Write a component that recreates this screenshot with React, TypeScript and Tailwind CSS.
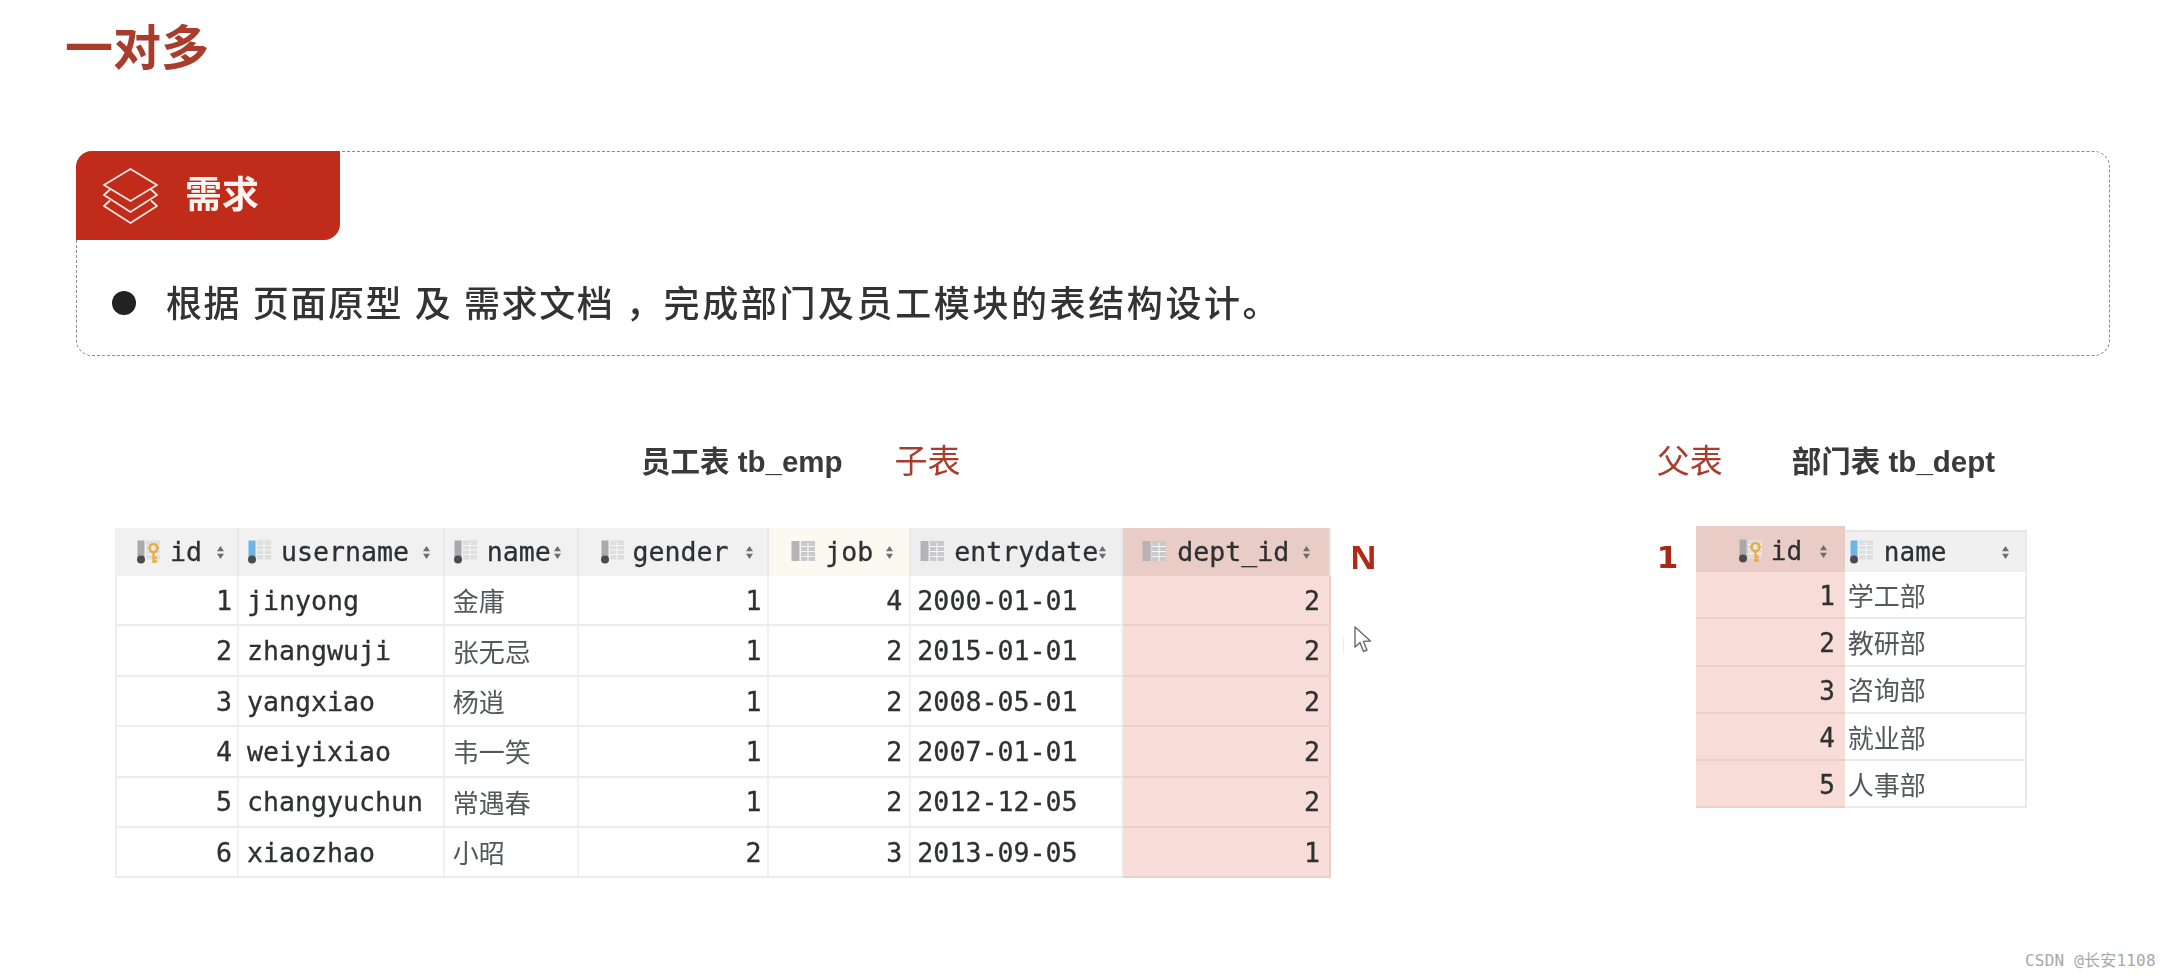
import React from "react";

const mono = "font-['DejaVu_Sans_Mono','Liberation_Mono',monospace]";
const heavy = "[-webkit-text-stroke:0.3px_#2e3032]";

function ColIcon({ kind }: { kind: "key" | "blue" | "gray" | "plain" }) {
  const bar = kind === "blue" ? "#6fb4e4" : "#a9a9ab";
  return (
    <svg width="25" height="24" viewBox="0 0 25 24" className="shrink-0">
      {kind === "plain" ? (
        <>
          <rect x="0.5" y="1" width="8" height="20" fill="#b4b4b6" />
          <rect x="10" y="1" width="14" height="20" fill="#c9c9cb" />
          <path d="M10 6.5h14M10 11.5h14M10 16.5h14M17 3v18" stroke="#f4f4f4" strokeWidth="1.2" />
        </>
      ) : (
        <>
          <rect x="1.5" y="0.5" width="7" height="16.5" fill={bar} />
          <rect x="10" y="0.5" width="14" height="19" fill="#dededf" />
          <path d="M10 5.5h14M10 10h14M10 14.5h14M17 2v17.5" stroke="#f6f6f6" strokeWidth="1.2" />
          <circle cx="5" cy="19.5" r="4" fill="#4b4b4d" />
        </>
      )}
      {kind === "key" && (
        <>
          <circle cx="17.5" cy="8" r="4" fill="none" stroke="#e7ae45" strokeWidth="2.6" />
          <path d="M17.5 11.5V23M17.5 18h3.5M17.5 21.5h3.5" stroke="#e7ae45" strokeWidth="2.4" fill="none" />
        </>
      )}
    </svg>
  );
}

function Sort() {
  return (
    <svg width="9" height="15" viewBox="0 0 9 15" className="shrink-0">
      <path d="M1 6.2 4.5 1 8 6.2ZM1 8.8 4.5 14 8 8.8Z" fill="#6e6e70" />
    </svg>
  );
}

function Layers() {
  return (
    <svg width="56" height="57" viewBox="0 0 56 57" fill="none" stroke="#f8e6e2" strokeWidth="1.8" strokeLinejoin="round">
      <path d="M27.5 2 54 18 27.5 34 1 18Z" />
      <path d="M7 22.5 1 28 27.5 45 54 28 48 22.5" />
      <path d="M7 33.5 1 39 27.5 56 54 39 48 33.5" />
    </svg>
  );
}

function Cursor() {
  return (
    <svg width="19" height="28" viewBox="0 0 19 28" fill="#fff" stroke="#6b6b6b" strokeWidth="1.4" strokeLinejoin="round">
      <path d="M2 1v20l5-4.5 3.5 9 3.5-1.5-3.6-8.6 7-.4Z" />
    </svg>
  );
}

const empRows = [
  ["1", "jinyong", "金庸", "1", "4", "2000-01-01", "2"],
  ["2", "zhangwuji", "张无忌", "1", "2", "2015-01-01", "2"],
  ["3", "yangxiao", "杨逍", "1", "2", "2008-05-01", "2"],
  ["4", "weiyixiao", "韦一笑", "1", "2", "2007-01-01", "2"],
  ["5", "changyuchun", "常遇春", "1", "2", "2012-12-05", "2"],
  ["6", "xiaozhao", "小昭", "2", "3", "2013-09-05", "1"],
];

const deptRows = [
  ["1", "学工部"],
  ["2", "教研部"],
  ["3", "咨询部"],
  ["4", "就业部"],
  ["5", "人事部"],
];

const cjk = "font-['Noto_Sans_CJK_SC',sans-serif] text-[#55585a] [-webkit-text-stroke:0px]";

function HeadCell({
  w,
  bg,
  pl,
  pr,
  gap,
  icon,
  label,
}: {
  w: string;
  bg: string;
  pl: string;
  pr: string;
  gap: string;
  icon: "key" | "blue" | "gray" | "plain";
  label: string;
}) {
  return (
    <div className={`${w} ${bg} ${pl} ${pr} flex h-full items-center border-r-2 border-[#e9e9e9]`}>
      <ColIcon kind={icon} />
      <span className={gap}>{label}</span>
      <span className="ml-auto flex">
        <Sort />
      </span>
    </div>
  );
}

function EmpTable() {
  return (
    <div className={`${mono} ${heavy} w-[1216px] text-[26.6px] leading-none text-[#2e3032]`}>
      <div className="flex h-[48px]">
        <HeadCell w="w-[124px]" bg="bg-[#f1f1f2]" pl="pl-[21px]" pr="pr-[12px]" gap="ml-[9px]" icon="key" label="id" />
        <HeadCell w="w-[206px]" bg="bg-[#f1f1f2]" pl="pl-[8px]" pr="pr-[12px]" gap="ml-[9px]" icon="blue" label="username" />
        <HeadCell w="w-[134px]" bg="bg-[#f1f1f2]" pl="pl-[8px]" pr="pr-[15px]" gap="ml-[9px]" icon="gray" label="name" />
        <HeadCell w="w-[191px]" bg="bg-[#f1f1f2]" pl="pl-[21px]" pr="pr-[13px]" gap="ml-[8px]" icon="gray" label="gender" />
        <HeadCell w="w-[142px]" bg="bg-[#fcfaf0]" pl="pl-[22px]" pr="pr-[15px]" gap="ml-[9px]" icon="plain" label="job" />
        <HeadCell w="w-[212px]" bg="bg-[#eeeeef]" pl="pl-[9px]" pr="pr-[15px]" gap="ml-[9px]" icon="plain" label="entrydate" />
        <HeadCell w="w-[208px]" bg="bg-[#eaccc7]" pl="pl-[19px]" pr="pr-[18px]" gap="ml-[10px]" icon="plain" label="dept_id" />
      </div>
      {empRows.map((r) => (
        <div key={r[0]} className="flex h-[50.4px] border-b-2 border-l-2 border-[#ececec]">
          <div className="flex w-[122px] items-center justify-end border-r-2 border-[#f1f1f1] pr-[5px] pt-[2px]">{r[0]}</div>
          <div className="flex w-[206px] items-center border-r-2 border-[#f1f1f1] pl-[8px] pt-[2px]">{r[1]}</div>
          <div className={`flex w-[134px] items-center border-r-2 border-[#f1f1f1] pl-[8px] text-[26px] ${cjk}`}>{r[2]}</div>
          <div className="flex w-[191px] items-center justify-end border-r-2 border-[#f1f1f1] pr-[6px] pt-[2px]">{r[3]}</div>
          <div className="flex w-[142px] items-center justify-end border-r-2 border-[#f1f1f1] pr-[7px] pt-[2px]">{r[4]}</div>
          <div className="flex w-[212px] items-center border-r-2 border-[#f1f1f1] pl-[6px] pt-[2px]">{r[5]}</div>
          <div className="-mb-[2px] flex w-[208px] items-center justify-end border-b-2 border-r-2 border-[#f0cdc8] bg-[#f8dcd8] pr-[9px] pt-[2px]">{r[6]}</div>
        </div>
      ))}
    </div>
  );
}

function DeptTable() {
  return (
    <div className={`${mono} ${heavy} flex w-[331px] text-[26px] leading-none text-[#2e3032]`}>
      <div className="w-[149px]">
        <div className="flex h-[46px] items-center bg-[#eaccc7] pl-[42px] pr-[17px] pt-[4px]">
          <ColIcon kind="key" />
          <span className="ml-[8px]">id</span>
          <span className="ml-auto flex">
            <Sort />
          </span>
        </div>
        {deptRows.map((r) => (
          <div key={r[0]} className="flex h-[47.3px] items-center justify-end border-b-2 border-[#f0cdc8] bg-[#f8dcd8] pr-[10px] pt-[3px]">
            {r[0]}
          </div>
        ))}
      </div>
      <div className="mt-[4px] w-[182px] border-r-2 border-[#e9e9e9]">
        <div className="flex h-[42px] items-center border-t-2 border-[#e6e6e6] bg-[#f0f0f1] pl-[4px] pr-[15px]">
          <ColIcon kind="blue" />
          <span className="ml-[10px]">name</span>
          <span className="ml-auto flex">
            <Sort />
          </span>
        </div>
        {deptRows.map((r) => (
          <div key={r[0]} className={`flex h-[47.3px] items-center border-b-2 border-[#ebebeb] pl-[3px] text-[26px] ${cjk}`}>
            {r[1]}
          </div>
        ))}
      </div>
    </div>
  );
}

export default function App() {
  return (
    <div className="relative h-[979px] w-[2172px] overflow-hidden bg-white font-['Liberation_Sans','Noto_Sans_CJK_SC',sans-serif]">
      <div className="blur-[0.5px]">
        <h1 className="pl-[65px] pt-[21px] text-[48px] font-bold leading-[56px] text-[#a83d2e]">一对多</h1>

        <section className="ml-[76px] mt-[74px] h-[205px] w-[2034px] rounded-[16px] border border-dashed border-[#8b8b8b]">
          <div className="-ml-px -mt-px flex h-[89px] w-[264px] items-center rounded-tl-[16px] rounded-br-[16px] bg-[#c02c19] pl-[27px]">
            <Layers />
            <span className="ml-[26px] text-[37px] font-bold text-[#fdf3f1]">需求</span>
          </div>
          <div className="mt-[36px] flex items-center pl-[35px]">
            <span className="h-[24px] w-[24px] rounded-full bg-[#222222]" />
            <span className="ml-[30px] mt-[4px] whitespace-pre text-[36px] font-medium leading-[50px] tracking-[1.6px] text-[#333333]">
              根据 页面原型 及 需求文档 ，<span className="tracking-[2.6px]">完成部门及员工模块的表结构设计。</span>
            </span>
          </div>
        </section>

        <div className="mt-[84px] flex items-start">
          <div className="ml-[115px] w-[1216px]">
            <div className="flex h-[44px] items-center">
              <span className="ml-[526px] text-[29.5px] font-bold text-[#3a3a3a]">员工表 tb_emp</span>
              <span className="ml-[52px] text-[33px] text-[#a83d2e]">子表</span>
            </div>
            <div className="mt-[44px]">
              <EmpTable />
            </div>
          </div>
          <span className="ml-[19px] mt-[95px] font-['Noto_Sans',sans-serif] text-[33px] font-bold leading-[44px] text-[#b02a1a]">N</span>
          <div className="ml-[280px]">
            <div className="flex h-[44px] items-center">
              <span className="text-[33px] text-[#a83d2e]">父表</span>
              <span className="ml-[69px] text-[29.5px] font-bold text-[#3a3a3a]">部门表 tb_dept</span>
            </div>
            <div className="mt-[42px] flex items-start">
              <span className="mt-[9px] w-[39px] font-['DejaVu_Sans',sans-serif] text-[31px] font-bold leading-[44px] text-[#a8281a]">1</span>
              <DeptTable />
            </div>
          </div>
        </div>
      </div>

      <div className="absolute left-[1343px] top-[638px] h-[16px] w-px bg-[#f1ecec]" />
      <div className="absolute left-[1353px] top-[626px]">
        <Cursor />
      </div>
      <span className="absolute left-[2025px] top-[951px] font-['DejaVu_Sans_Mono','Noto_Sans_CJK_SC',monospace] text-[16px] leading-[20px] tracking-[0.2px] text-[#a8a8a8]">CSDN @长安1108</span>
    </div>
  );
}
